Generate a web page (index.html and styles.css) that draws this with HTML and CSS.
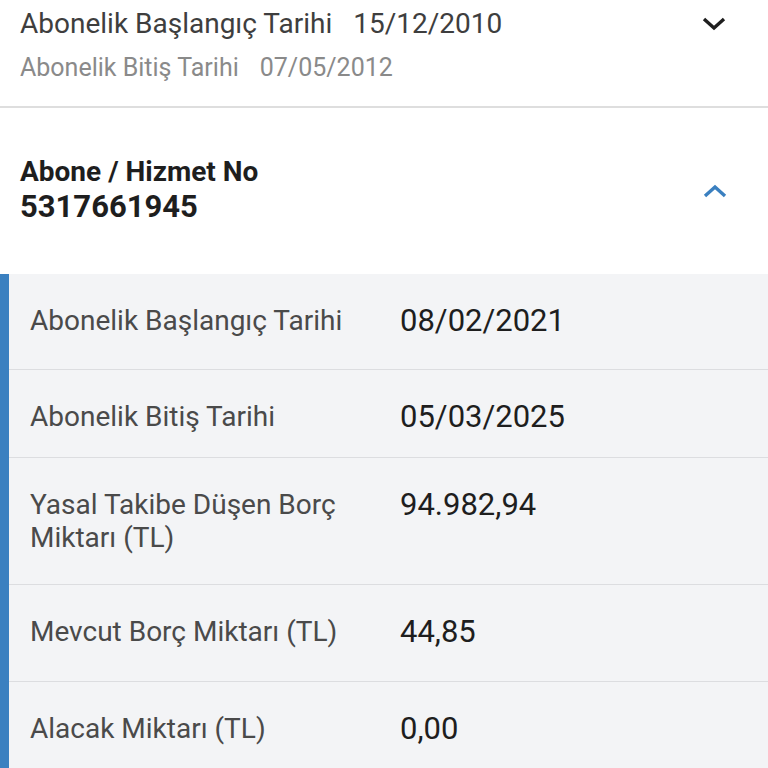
FILE: index.html
```html
<!DOCTYPE html>
<html lang="tr">
<head>
  <meta charset="UTF-8">
  <meta name="viewport" content="width=device-width, initial-scale=1.0">
  <title>Abonelik Bilgileri</title>
  <link rel="stylesheet" href="styles.css">
</head>
<body>
  <div class="summary">
    <div class="summary-text">
      <div class="summary-main"><span>Abonelik Başlangıç Tarihi</span><span>15/12/2010</span></div>
      <div class="summary-sub"><span>Abonelik Bitiş Tarihi</span><span>07/05/2012</span></div>
    </div>
    <svg class="chevron chevron-down" width="26" height="16" viewBox="0 0 26 16">
      <path d="M3 3 L13 12 L23 3" fill="none" stroke="#1e1e1e" stroke-width="3.4"/>
    </svg>
  </div>

  <div class="account-header">
    <div class="account-title">
      <div class="account-label">Abone / Hizmet No</div>
      <div class="account-number">5317661945</div>
    </div>
    <svg class="chevron chevron-up" width="26" height="16" viewBox="0 0 26 16">
      <path d="M3 13 L13 4 L23 13" fill="none" stroke="#3b80c0" stroke-width="3.4"/>
    </svg>
  </div>

  <div class="details">
    <div class="detail-row row-1">
      <div class="detail-label">Abonelik Başlangıç Tarihi</div>
      <div class="detail-value">08/02/2021</div>
    </div>
    <div class="detail-row row-2">
      <div class="detail-label">Abonelik Bitiş Tarihi</div>
      <div class="detail-value">05/03/2025</div>
    </div>
    <div class="detail-row row-3">
      <div class="detail-label">Yasal Takibe Düşen Borç Miktarı (TL)</div>
      <div class="detail-value">94.982,94</div>
    </div>
    <div class="detail-row row-4">
      <div class="detail-label">Mevcut Borç Miktarı (TL)</div>
      <div class="detail-value">44,85</div>
    </div>
    <div class="detail-row row-5">
      <div class="detail-label">Alacak Miktarı (TL)</div>
      <div class="detail-value">0,00</div>
    </div>
  </div>
</body>
</html>
```

FILE: styles.css
```css
* { box-sizing: border-box; margin: 0; padding: 0; }
html, body {
  height: 100%;
  overflow: hidden;
}
body {
  font-family: Roboto, "Noto Sans", sans-serif;
  background: #fff;
  color: #222;
}

/* collapsed previous subscription */
.summary {
  height: 108px;
  border-bottom: 2px solid #dedede;
  display: flex;
  justify-content: space-between;
  align-items: flex-start;
  padding: 5px 41px 0 20px;
}
.summary-main {
  font-size: 28px;
  line-height: 38px;
  color: #3e3e3e;
}
.summary-sub {
  font-size: 25px;
  line-height: 30px;
  margin-top: 10px;
  color: #8a8a8a;
}
.summary-main span + span,
.summary-sub span + span { margin-left: 21px; }
.chevron-down { margin-top: 11px; }

/* expanded subscription header */
.account-header {
  height: 166px;
  display: flex;
  justify-content: space-between;
  align-items: center;
  padding: 0 40px 0 20px;
}
.account-title { margin-top: -2px; }
.account-label {
  font-size: 28px;
  font-weight: 700;
  line-height: 34px;
  color: #1e1e1e;
}
.account-number {
  font-size: 31px;
  font-weight: 700;
  line-height: 36px;
  color: #1e1e1e;
}

/* details panel */
.details {
  background: #f3f4f6;
  border-left: 9px solid #3b80c0;
  min-height: 500px;
}
.detail-row {
  display: flex;
  padding: 30px 0 0 21px;
  border-bottom: 1px solid #dcdde0;
}
.detail-row:last-child { border-bottom: none; }
.row-1 { height: 96px; }
.row-2 { height: 88px; }
.row-3 { height: 127px; }
.row-4 { height: 97px; }
.detail-label {
  width: 370px;
  padding-right: 24px;
  font-size: 28px;
  line-height: 33px;
  color: #4a4a4a;
}
.detail-value {
  font-size: 31px;
  line-height: 33px;
  color: #1e1e1e;
}
```
